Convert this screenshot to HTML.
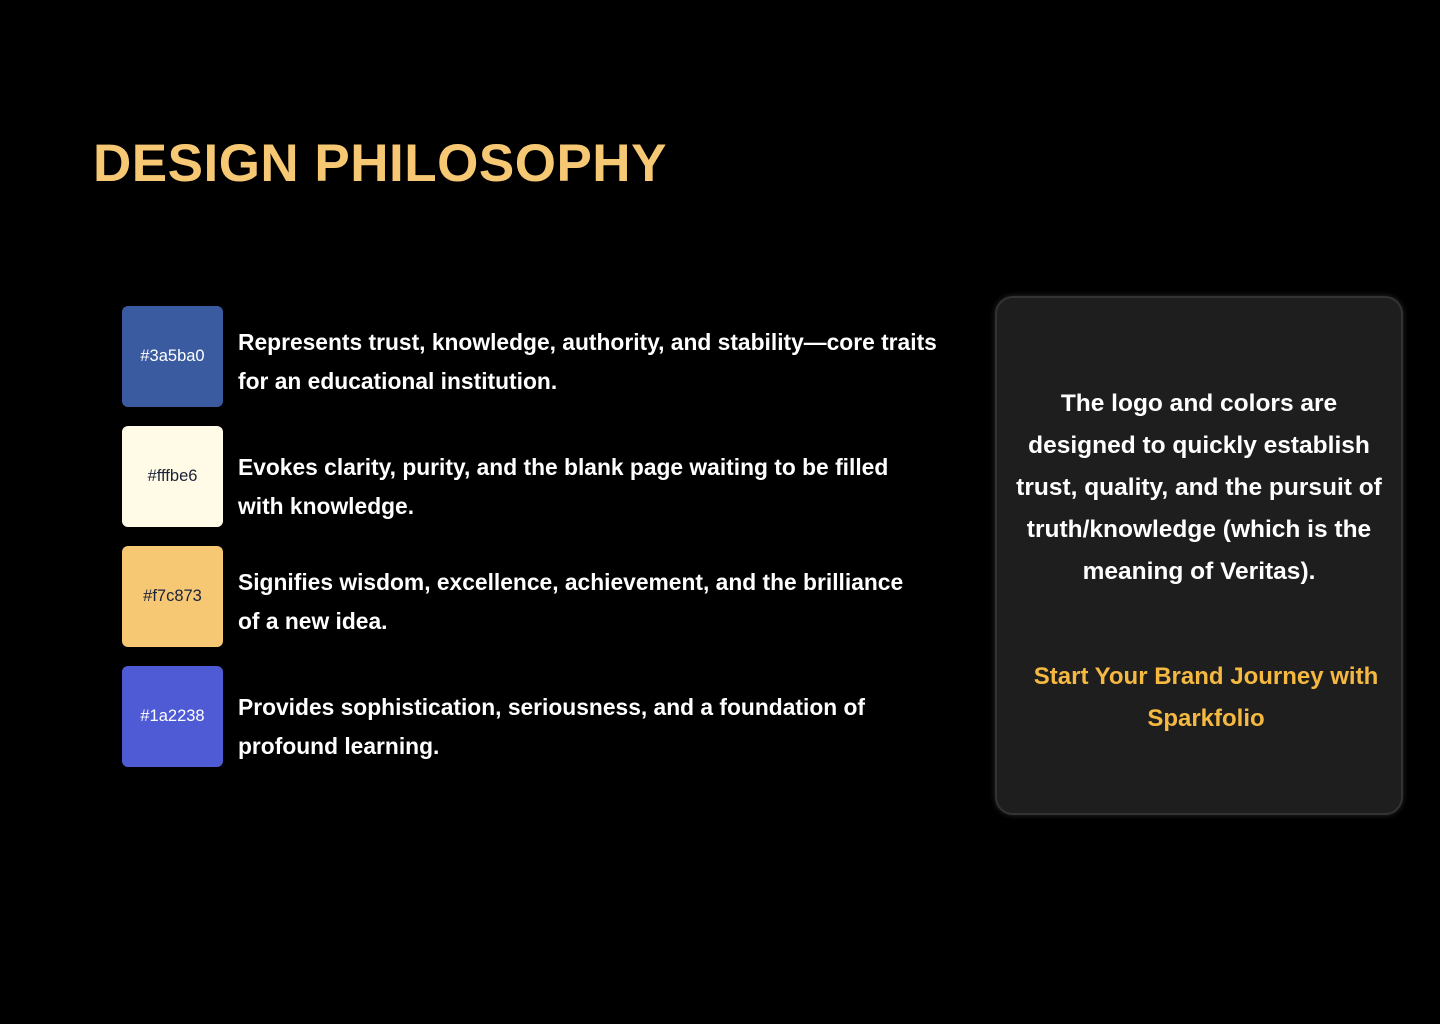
<!DOCTYPE html>
<html><head><meta charset="utf-8"><style>
*{margin:0;padding:0;box-sizing:border-box}
body{width:1440px;height:1024px;background:#000;font-family:"Liberation Sans",sans-serif;position:relative;overflow:hidden}
h1{position:absolute;left:93px;top:133px;font-size:53px;font-weight:bold;color:#f7c873;white-space:nowrap;letter-spacing:0.5px}
.row{position:absolute;left:122px;width:900px;height:101px;display:flex;align-items:center}
.sw{width:101px;height:101px;border-radius:6px;flex:none;display:flex;align-items:center;justify-content:center;font-size:16.5px;color:#fff}
.t{margin-left:15px;color:#fff;font-weight:bold;font-size:22.8px;line-height:39px;white-space:nowrap;position:relative}
.card{position:absolute;left:995px;top:296px;width:408px;height:519px;background:#1e1e1e;border-radius:18px;border:2px solid #333;box-shadow:0 0 6px rgba(120,120,120,.35);text-align:center}
.p{position:absolute;left:-20px;right:-20px;top:85px;color:#fff;font-weight:bold;font-size:24.5px;line-height:42px;white-space:nowrap}
.o{position:absolute;left:-6px;right:-20px;top:358px;color:#f5b942;font-weight:bold;font-size:24px;line-height:42px;white-space:nowrap}
</style></head><body>
<h1>DESIGN PHILOSOPHY</h1>
<div class="row" style="top:306px"><div class="sw" style="background:#3a5ba0">#3a5ba0</div><div class="t" style="top:5px">Represents trust, knowledge, authority, and stability—core traits<br>for an educational institution.</div></div>
<div class="row" style="top:426px"><div class="sw" style="background:#fffbe6;color:#1a2238;top:0">#fffbe6</div><div class="t" style="top:10px">Evokes clarity, purity, and the blank page waiting to be filled<br>with knowledge.</div></div>
<div class="row" style="top:546px"><div class="sw" style="background:#f7c873;color:#1a2238">#f7c873</div><div class="t" style="top:5px">Signifies wisdom, excellence, achievement, and the brilliance<br>of a new idea.</div></div>
<div class="row" style="top:666px"><div class="sw" style="background:#4f5bd5">#1a2238</div><div class="t" style="top:10px">Provides sophistication, seriousness, and a foundation of<br>profound learning.</div></div>
<div class="card">
<div class="p">The logo and colors are<br>designed to quickly establish<br>trust, quality, and the pursuit of<br>truth/knowledge (which is the<br>meaning of Veritas).</div>
<div class="o">Start Your Brand Journey with<br>Sparkfolio</div>
</div>
</body></html>
